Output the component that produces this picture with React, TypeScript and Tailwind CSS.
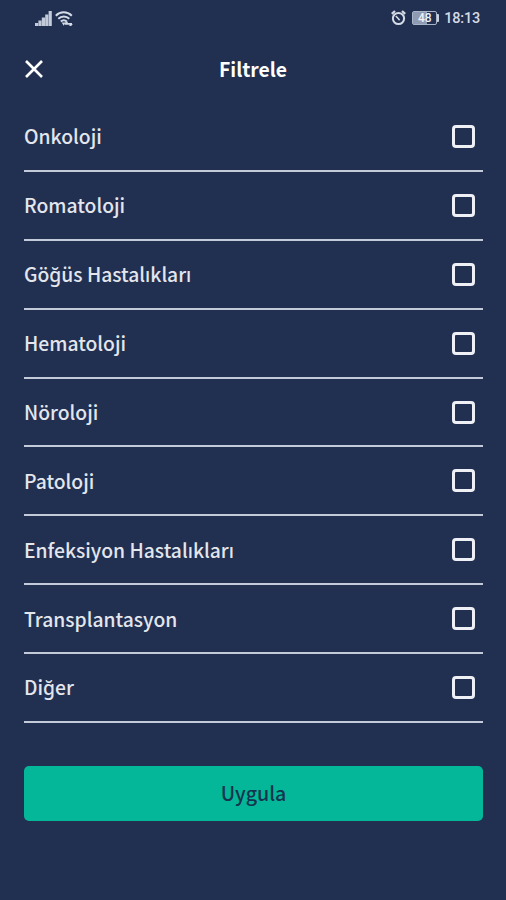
import { useState } from 'react';

const CATEGORIES = [
  'Onkoloji',
  'Romatoloji',
  'Göğüs Hastalıkları',
  'Hematoloji',
  'Nöroloji',
  'Patoloji',
  'Enfeksiyon Hastalıkları',
  'Transplantasyon',
  'Diğer',
];

function SignalIcon() {
  return (
    <svg width="17" height="15" viewBox="0 0 17 15" fill="#c3cbda">
      <rect x="0" y="12" width="3.2" height="3" />
      <rect x="3.4" y="9.5" width="3.2" height="5.5" />
      <rect x="6.8" y="6.5" width="3.2" height="8.5" />
      <rect x="10.2" y="3.5" width="3.2" height="11.5" />
      <rect x="13.6" y="0" width="3.2" height="15" />
    </svg>
  );
}

function WifiIcon() {
  return (
    <svg width="18" height="15" viewBox="0 0 18 15" fill="none" stroke="#d5dbe6" strokeWidth="2">
      <path d="M0.8 4.8 C5.2 0.2 12.2 0.2 16.8 4.8" />
      <path d="M3.3 7.8 C6.4 4.8 11.2 4.8 14.3 7.8" />
      <path d="M5.8 10.6 C7.6 8.9 10 8.9 11.8 10.6" />
      <path d="M6.6 11.6 L8.8 14.8 L10.6 11.6 Z" fill="#d5dbe6" stroke="none" />
      <path d="M10 12.8 H17 M12.4 10.6 L10.2 12.8 M14.8 15 L17 12.8" strokeWidth="1.8" />
    </svg>
  );
}

function AlarmIcon() {
  return (
    <svg width="15" height="16" viewBox="0 0 15 16" fill="none" stroke="#d5dbe6" strokeWidth="2">
      <circle cx="7.5" cy="8.5" r="5.6" />
      <path d="M0.8 3.9 L4 1 M14.2 3.9 L11 1" strokeWidth="2.2" />
      <path d="M4.8 6 L7.4 8.8 L8.6 10.2" strokeWidth="1.6" />
    </svg>
  );
}

function Battery({ level }: { level: number }) {
  return (
    <div className="flex items-center">
      <div className="relative w-[25px] h-[14px] border border-[#aab4c8] rounded-[2px]">
        <div className="w-[14px] h-full bg-[#8f9bb3]" />
        <span className="absolute inset-0 flex items-center justify-center text-[12px] font-medium leading-none text-[#eef1f6]">
          {level}
        </span>
      </div>
      <div className="w-[2px] h-[8px] rounded-r-[1px] bg-[#c9d0de]" />
    </div>
  );
}

export default function App() {
  const [selected, setSelected] = useState<string[]>([]);

  const toggle = (name: string) => {
    setSelected((s) => (s.includes(name) ? s.filter((n) => n !== name) : [...s, name]));
  };

  return (
    <div className="w-[506px] h-[900px] overflow-hidden bg-[#212f51] text-[#e3e6ec] font-['Noto_Sans_CJK_JP','Noto_Sans',sans-serif]">
      {/* Status bar */}
      <div className="h-9 pl-[35px] pr-[26px] flex items-center justify-between font-['Roboto',sans-serif]">
        <div className="flex items-center gap-[3px]">
          <SignalIcon />
          <WifiIcon />
        </div>
        <div className="flex items-center">
          <AlarmIcon />
          <div className="ml-[6px]">
            <Battery level={48} />
          </div>
          <span className="ml-[5px] pt-[3px] text-[14.5px] leading-none font-medium tracking-[-0.2px] text-[#d5dbe6]">18:13</span>
        </div>
      </div>

      {/* Header */}
      <header className="h-[66px] px-6 grid grid-cols-[1fr_auto_1fr] items-center">
        <button aria-label="Kapat" className="w-5 h-5 justify-self-start">
          <svg width="20" height="20" viewBox="0 0 20 20" stroke="#ffffff" strokeWidth="2.6">
            <path d="M2 2 L18 18 M18 2 L2 18" />
          </svg>
        </button>
        <h1 className="pt-0.5 text-[19.3px] leading-none font-bold text-white">Filtrele</h1>
      </header>

      {/* Category list */}
      <ul className="pl-6 pt-px pr-[23px]">
        {CATEGORIES.map((name) => (
          <li key={name} className="h-[68.9px] border-b-2 border-[#c3cad9]">
            <label className="h-full pr-2 flex items-center justify-between cursor-pointer">
              <span className="pt-px text-[19.3px] leading-none font-medium">{name}</span>
              <input
                type="checkbox"
                checked={selected.includes(name)}
                onChange={() => toggle(name)}
                className="appearance-none w-[23px] h-[23px] border-3 border-[#eef0f6] rounded-[4px] checked:bg-[#04b798]"
              />
            </label>
          </li>
        ))}
      </ul>

      <div className="pl-6 pr-[23px] pt-[43px]">
        <button className="w-full h-[55px] pb-px rounded-[5px] bg-[#04b798] text-[19.6px] leading-none font-medium text-[#14344f]">
          Uygula
        </button>
      </div>
    </div>
  );
}
